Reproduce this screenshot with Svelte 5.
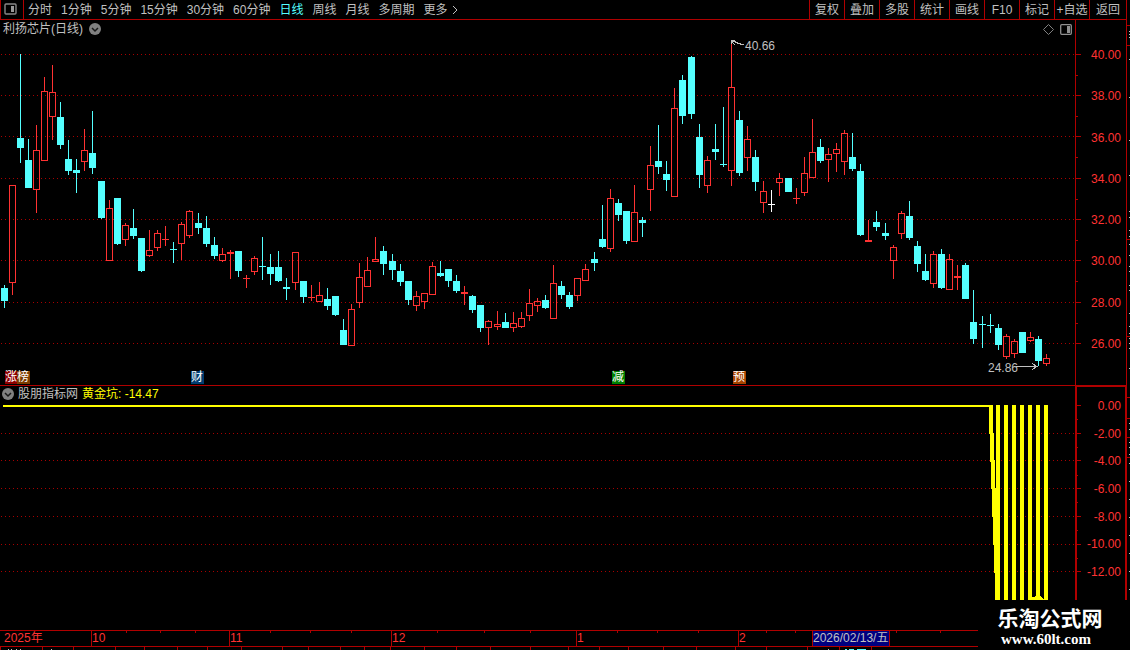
<script>
  const periods = ['分时', '1分钟', '5分钟', '15分钟', '30分钟', '60分钟', '日线', '周线', '月线', '多周期', '更多'];
  const tools = ['复权', '叠加', '多股', '统计', '画线', 'F10', '标记', '+自选', '返回'];
  let period = $state('日线');

  // both plots share one horizontal scale
  const W = 1075;
  const left = (x) => `left: ${(x / W) * 100}%`;

  const priceLabels = ['40.00', '38.00', '36.00', '34.00', '32.00', '30.00', '28.00', '26.00'];
  const priceLines = [54, 95, 136, 178, 219, 260, 302, 343];
  const priceMinor = [75, 116, 157, 199, 240, 281, 323];

  const valueLabels = ['0.00', '-2.00', '-4.00', '-6.00', '-8.00', '-10.00', '-12.00'];
  const valueLines = [405, 433, 460, 488, 516, 544, 571];
  const valueMinor = [419, 447, 475, 502, 530, 558];

  // x, high, body top, body bottom, low, u = up / d = down / f = flat
  const candles = [
    [4, 285, 288, 301, 308, 'd'], [12, 185, 185, 283, 295, 'u'], [20, 54, 138, 148, 163, 'd'],
    [28, 139, 160, 188, 188, 'd'], [36, 125, 150, 190, 213, 'u'], [44, 77, 91, 161, 161, 'u'],
    [52, 65, 92, 117, 140, 'u'], [60, 102, 117, 145, 149, 'd'], [68, 140, 159, 171, 175, 'd'],
    [76, 159, 170, 173, 193, 'd'], [84, 129, 150, 162, 171, 'u'], [92, 111, 153, 168, 174, 'd'],
    [101, 181, 181, 218, 219, 'd'], [109, 200, 208, 261, 261, 'u'], [117, 198, 198, 244, 245, 'd'],
    [125, 223, 225, 240, 246, 'u'], [133, 209, 228, 236, 239, 'd'], [141, 238, 238, 271, 272, 'd'],
    [149, 230, 250, 256, 257, 'u'], [157, 230, 233, 248, 251, 'u'], [165, 226, 239, 240, 246, 'u'],
    [173, 242, 249, 250, 263, 'd'], [181, 222, 224, 244, 260, 'u'], [189, 210, 211, 236, 238, 'u'],
    [198, 213, 223, 228, 234, 'd'], [206, 216, 228, 244, 247, 'd'], [214, 237, 245, 256, 259, 'd'],
    [222, 248, 254, 261, 262, 'u'], [230, 250, 252, 254, 279, 'u'], [238, 251, 251, 271, 277, 'd'],
    [246, 275, 278, 279, 288, 'u'], [254, 256, 258, 272, 275, 'u'], [262, 237, 266, 267, 280, 'd'],
    [270, 254, 267, 274, 285, 'd'], [278, 251, 267, 281, 282, 'd'], [286, 278, 287, 289, 300, 'd'],
    [295, 252, 252, 283, 290, 'u'], [303, 281, 281, 297, 303, 'd'], [311, 285, 297, 298, 301, 'u'],
    [319, 282, 295, 302, 302, 'u'], [327, 288, 299, 306, 310, 'd'], [335, 296, 296, 315, 316, 'd'],
    [343, 319, 330, 345, 345, 'd'], [351, 304, 309, 346, 346, 'u'], [359, 263, 277, 303, 308, 'u'],
    [367, 257, 270, 287, 287, 'u'], [375, 237, 259, 262, 262, 'u'], [383, 246, 251, 264, 275, 'd'],
    [392, 254, 261, 270, 280, 'd'], [400, 264, 271, 282, 286, 'd'], [408, 281, 281, 300, 305, 'd'],
    [416, 291, 296, 306, 311, 'u'], [424, 293, 293, 302, 309, 'u'], [432, 262, 266, 295, 295, 'u'],
    [440, 261, 273, 276, 277, 'd'], [448, 269, 269, 281, 287, 'd'], [456, 275, 281, 291, 293, 'd'],
    [464, 286, 292, 294, 305, 'u'], [472, 295, 296, 310, 313, 'd'], [480, 305, 305, 328, 332, 'd'],
    [488, 320, 321, 328, 345, 'u'], [497, 311, 324, 327, 330, 'u'], [505, 313, 322, 328, 328, 'd'],
    [513, 312, 323, 328, 332, 'u'], [521, 312, 318, 327, 328, 'u'], [529, 289, 303, 316, 321, 'u'],
    [537, 298, 301, 306, 312, 'u'], [545, 295, 300, 308, 309, 'd'], [553, 265, 283, 319, 319, 'u'],
    [561, 281, 286, 295, 299, 'd'], [569, 292, 295, 307, 309, 'd'], [577, 278, 278, 296, 301, 'u'],
    [585, 264, 269, 281, 281, 'u'], [594, 252, 259, 263, 271, 'd'], [602, 205, 239, 247, 248, 'd'],
    [610, 189, 198, 249, 252, 'u'], [618, 199, 203, 215, 221, 'd'], [626, 211, 211, 241, 244, 'd'],
    [634, 185, 212, 242, 242, 'u'], [642, 217, 220, 223, 237, 'd'], [650, 146, 165, 190, 211, 'u'],
    [658, 125, 161, 167, 174, 'd'], [666, 161, 174, 180, 191, 'd'], [674, 88, 108, 197, 197, 'u'],
    [682, 75, 80, 116, 124, 'd'], [691, 56, 57, 114, 119, 'd'], [699, 124, 137, 175, 188, 'd'],
    [707, 156, 160, 186, 193, 'u'], [715, 124, 149, 152, 160, 'd'], [723, 107, 164, 165, 167, 'd'],
    [731, 43, 87, 171, 186, 'u'], [739, 111, 120, 173, 176, 'd'], [747, 126, 139, 158, 171, 'u'],
    [755, 150, 157, 182, 191, 'd'], [763, 181, 191, 203, 213, 'u'], [771, 190, 204, 205, 212, 'f'],
    [779, 173, 178, 183, 196, 'u'], [788, 178, 178, 192, 192, 'd'], [796, 188, 198, 199, 204, 'u'],
    [804, 157, 173, 193, 196, 'u'], [812, 119, 152, 178, 178, 'u'], [820, 139, 147, 161, 163, 'd'],
    [828, 148, 154, 160, 182, 'u'], [836, 143, 149, 154, 172, 'u'], [844, 130, 133, 162, 175, 'u'],
    [852, 133, 157, 169, 171, 'd'], [860, 164, 171, 235, 236, 'd'], [868, 220, 240, 242, 242, 'u'],
    [876, 211, 222, 227, 231, 'd'], [885, 223, 233, 236, 240, 'd'], [893, 245, 247, 261, 279, 'u'],
    [901, 211, 213, 234, 239, 'u'], [909, 201, 216, 238, 240, 'd'], [917, 241, 246, 264, 272, 'd'],
    [925, 254, 271, 280, 281, 'd'], [933, 251, 254, 284, 288, 'u'], [941, 249, 254, 288, 289, 'd'],
    [949, 254, 259, 290, 290, 'u'], [957, 265, 276, 278, 290, 'u'], [965, 263, 265, 299, 299, 'd'],
    [973, 290, 322, 339, 344, 'd'], [982, 316, 324, 325, 348, 'd'], [990, 314, 325, 326, 333, 'd'],
    [998, 324, 328, 345, 350, 'd'], [1006, 334, 336, 357, 359, 'u'], [1014, 339, 341, 354, 358, 'u'],
    [1022, 332, 332, 353, 353, 'd'], [1030, 332, 337, 341, 342, 'u'], [1038, 336, 339, 361, 366, 'd'],
    [1046, 354, 358, 364, 366, 'u']
  ];
  const colors = { u: '#ff3232', d: '#54ffff', f: '#ffffff' };

  const badges = [
    { x: 5, text: '涨', bg: '#8c0000' },
    { x: 17, text: '榜', bg: '#7c3c00' },
    { x: 191, text: '财', bg: '#003c70' },
    { x: 612, text: '减', bg: '#008000' },
    { x: 733, text: '预', bg: '#a84400' }
  ];

  const bars = [996, 1004, 1012, 1020, 1028, 1036, 1044];

  const months = [
    { x: 91, text: '10' },
    { x: 229, text: '11' },
    { x: 391, text: '12' },
    { x: 576, text: '1' },
    { x: 738, text: '2' }
  ];
  const weeks = [126, 160, 195, 270, 310, 351, 437, 484, 530, 617, 657, 698, 766, 795, 896, 940];
  const tabs = [0, 42, 73, 115, 144, 177, 207, 241, 282, 308, 340, 364, 390, 424, 456, 490, 530, 568, 599, 628, 663, 696, 735, 766, 807, 839, 871];

  const edgeLines = [25, 45, 239, 336, 397, 418, 437, 457];
  const edgeDots = [31, 34, 37, 59, 97, 140, 175, 211, 217, 230, 236, 244, 255, 266, 271, 285, 290, 313, 326, 333, 338, 343, 348, 368, 423, 429, 442, 447, 454, 463, 481, 499, 517, 535, 553, 571, 589];
</script>

<div class="terminal">
  <div class="main">
    <header>
      <button class="layout" aria-label="布局">
        <svg width="13" height="12" viewBox="0 0 13 12">
          <rect x="1" y="1" width="11" height="10" rx="1" fill="none" stroke="#888" stroke-width="1.4" />
          <rect x="7" y="3" width="3" height="6" fill="#999" />
        </svg>
      </button>
      <nav class="periods">
        {#each periods as p}
          <button class:active={p === period} onclick={() => (period = p)}>{p}</button>
        {/each}
        <svg class="more" width="6" height="10" viewBox="0 0 6 10">
          <path d="M1 1l4 4-4 4" fill="none" stroke="#c0c0c0" />
        </svg>
      </nav>
      <nav class="tools">
        {#each tools as t}
          <button>{t}</button>
        {/each}
      </nav>
    </header>

    <section class="price">
      <div class="plot">
        <svg class="chart" viewBox="0 20 1075 365" preserveAspectRatio="none" shape-rendering="crispEdges">
          {#each priceLines as y}
            <line class="grid" x1="1" x2={W} y1={y + 0.5} y2={y + 0.5} />
          {/each}
          {#each candles as [x, high, top, bottom, low, kind]}
            <g fill={colors[kind]}>
              <rect {x} y={high} width="1" height={top - high} />
              <rect {x} y={bottom} width="1" height={low - bottom} />
              {#if kind === 'u' && bottom - top > 2}
                <rect x={x - 2.5} y={top + 0.5} width="6" height={bottom - top - 1} fill="none" stroke={colors.u} />
              {:else}
                <rect x={x - 3} y={top} width="7" height={bottom - top} />
              {/if}
            </g>
          {/each}
          <path class="arrow" d="M731.5 44v-4h3M731.5 41.500h3l3 1.500 6 2M732 42l3 3" />
          <path class="arrow" d="M1016 366.500h21M1032 363.500l5 3-5 3" />
        </svg>
        <div class="title">
          <h1>利扬芯片(日线)</h1>
          <button class="round" aria-label="展开">
            <svg width="12" height="12" viewBox="0 0 12 12">
              <circle cx="6" cy="6" r="6" fill="#808080" />
              <path d="M3 5l3 3 3-3" fill="none" stroke="#181818" stroke-width="1.500" />
            </svg>
          </button>
          <svg class="diamond" width="11" height="11" viewBox="0 0 11 11">
            <path d="M5.500.5l5 5-5 5-5-5z" fill="none" stroke="#808080" />
          </svg>
          <svg width="12" height="11" viewBox="0 0 12 11">
            <rect x=".7" y=".7" width="10.600" height="9.600" rx="1" fill="none" stroke="#909090" stroke-width="1.300" />
            <rect x="7" y="2" width="3" height="7" fill="#909090" />
          </svg>
        </div>
        <span class="mark high" style={left(745)}>40.66</span>
        <span class="mark low" style={left(988)}>24.86</span>
        {#each badges as b}
          <span class="badge" style="{left(b.x)}; background: {b.bg}">{b.text}</span>
        {/each}
      </div>
      <div class="axis">
        <svg width="6" height="365" viewBox="0 20 6 365" shape-rendering="crispEdges">
          {#each priceLines as y}<rect {y} width="5" height="1" />{/each}
          {#each priceMinor as y}<rect {y} width="2" height="1" />{/each}
        </svg>
        {#each priceLabels as label}
          <span>{label}</span>
        {/each}
      </div>
    </section>

    <section class="indicator">
      <div class="plot">
        <svg class="chart" viewBox="0 386 1075 244" preserveAspectRatio="none" shape-rendering="crispEdges">
          {#each valueLines.slice(1) as y}
            <line class="grid" x1="1" x2={W} y1={y + 0.5} y2={y + 0.5} />
          {/each}
          <g fill="#ffff00">
            <rect x="3" y="405" width="990" height="2" />
            {#each valueLines as y, i}
              <rect x={989 + i} {y} width={i > 2 ? 8 - i : 4} height="29" />
            {/each}
            {#each bars as x}
              <rect {x} y="405" width="4" height="195" />
            {/each}
            <path d="M1030 600v-3h4l3-2h2l5 5z" />
          </g>
        </svg>
        <div class="legend">
          <button class="round" aria-label="展开">
            <svg width="12" height="12" viewBox="0 0 12 12">
              <circle cx="6" cy="6" r="6" fill="#808080" />
              <path d="M3 5l3 3 3-3" fill="none" stroke="#181818" stroke-width="1.500" />
            </svg>
          </button>
          <span>股朋指标网</span>
          <span class="value">黄金坑: -14.47</span>
        </div>
      </div>
      <div class="axis">
        <svg width="6" height="243" viewBox="0 387 6 243" shape-rendering="crispEdges">
          {#each valueLines as y}<rect {y} width="4" height="1" />{/each}
          {#each valueMinor as y}<rect {y} width="1" height="1" />{/each}
        </svg>
        {#each valueLabels as label}
          <span>{label}</span>
        {/each}
      </div>
    </section>

    <footer>
      <div class="dates">
        <span class="year">2025年</span>
        {#each weeks as x}
          <i style={left(x)}></i>
        {/each}
        {#each months as m}
          <span class="month" style={left(m.x)}>{m.text}</span>
        {/each}
        <span class="current" style={left(812)}>2026/02/13/五</span>
      </div>
      <div class="tabs">
        {#each tabs as x}
          <i style={left(x)}></i>
        {/each}
        <svg class="chart" viewBox="0 0 1075 3" preserveAspectRatio="none" shape-rendering="crispEdges">
          <path d="M8 2h1M11 2h1M16 2h1M20 2h1M51 2h1M828 2h1" stroke="#c0c0c0" />
          <path d="M845 2h2M849 2h5M857 2h9" stroke="#54ffff" />
        </svg>
      </div>
    </footer>
  </div>

  <svg class="edge" width="3" height="650" viewBox="0 0 3 650" shape-rendering="crispEdges">
    {#each edgeLines as y}<rect {y} width="3" height="1" fill="#b00000" />{/each}
    {#each edgeDots as y}<rect x="2" {y} width="1" height="1" fill="#c0c0c0" />{/each}
  </svg>

  <div class="watermark">
    <strong>乐淘公式网</strong>
    <a href="http://www.60lt.com">www.60lt.com</a>
  </div>
</div>

<style>
  :global(body) {
    background: #000;
    margin: 0;
  }
  .terminal {
    background: #000;
    color: #c0c0c0;
    display: flex;
    font-family: "Liberation Sans", "Noto Sans CJK SC", sans-serif;
    font-size: 12px;
    line-height: 16px;
    overflow: hidden;
    position: relative;
  }
  .main {
    border-right: 1px solid #b00000;
    flex: 1;
    min-width: 0;
  }
  .edge {
    flex: none;
  }
  svg {
    display: block;
  }
  button {
    background: none;
    border: none;
    color: inherit;
    cursor: pointer;
    font: inherit;
    padding: 0;
    white-space: nowrap;
  }

  header {
    border-bottom: 1px solid #b00000;
    display: flex;
    height: 19px;
  }
  .layout {
    border-left: 1px solid #b00000;
    border-right: 1px solid #b00000;
    box-sizing: border-box;
    padding: 0 0 2px 3px;
    width: 24px;
  }
  .periods {
    align-items: center;
    display: flex;
    flex: 1;
    gap: 9px;
    padding-left: 4px;
  }
  .periods .active {
    color: #54ffff;
  }
  .more {
    margin-left: -5px;
  }
  .tools {
    display: flex;
  }
  .tools button {
    border-left: 1px solid #b00000;
    box-sizing: border-box;
    width: 35px;
  }
  .tools button:last-child {
    width: 37px;
  }

  section {
    display: flex;
  }
  .plot {
    flex: 1;
    min-width: 0;
    position: relative;
  }
  .chart {
    width: 100%;
  }
  .price {
    border-bottom: 1px solid #b00000;
  }
  .price .chart {
    height: 365px;
  }
  .indicator .chart {
    height: 244px;
  }
  .grid {
    stroke: #a80000;
    stroke-dasharray: 1 3;
  }
  .arrow {
    fill: none;
    stroke: #c0c0c0;
  }
  .axis {
    border-left: 1px solid #b00000;
    box-sizing: border-box;
    color: #ff3232;
    display: flex;
    flex-direction: column;
    justify-content: space-between;
    line-height: 20px;
    padding: 25px 5px 31px 0;
    position: relative;
    text-align: right;
    width: 51px;
  }
  .axis svg {
    fill: #b00000;
    left: 0;
    position: absolute;
    top: 0;
  }
  .indicator .axis {
    border-left-width: 2px;
    border-right: 1px solid #b00000;
    border-top: 1px solid #b00000;
    padding: 9px 4px 48px 0;
  }

  .title, .legend {
    align-items: center;
    display: flex;
    left: 0;
    position: absolute;
    right: 0;
    top: 1px;
  }
  .title {
    gap: 6px;
    padding: 0 3px;
  }
  .title h1 {
    font-size: 12px;
    font-weight: normal;
    margin: 0;
  }
  .diamond {
    margin-left: auto;
  }
  .legend {
    gap: 4px;
    padding-left: 2px;
    top: 0;
  }
  .value {
    color: #ffff00;
  }
  .mark, .badge {
    position: absolute;
  }
  .high {
    top: 18px;
  }
  .low {
    bottom: 9px;
  }
  .badge {
    bottom: 1px;
    color: #fff;
    line-height: 13px;
    width: 13px;
  }

  .dates {
    border-bottom: 1px solid #b00000;
    border-top: 1px solid #b00000;
    color: #ff3232;
    height: 15px;
    line-height: 15px;
    margin-right: 51px;
    position: relative;
  }
  .year {
    padding-left: 4px;
  }
  .month, .current {
    border-left: 1px solid #b00000;
    position: absolute;
    top: 0;
  }
  .current {
    background: #000080;
    border-right: 1px solid #b00000;
    color: #c0c0c0;
    padding-right: 1px;
  }
  footer i {
    background: #b00000;
    height: 2px;
    position: absolute;
    top: 0;
    width: 1px;
  }
  .tabs {
    height: 3px;
    margin-right: 51px;
    position: relative;
  }
  .tabs .chart {
    height: 3px;
  }
  .tabs i {
    height: 3px;
  }

  .watermark {
    align-items: center;
    background: #000;
    bottom: 0;
    box-sizing: border-box;
    color: #fff;
    display: flex;
    flex-direction: column;
    height: 50px;
    padding: 8px 8px 0 0;
    position: absolute;
    right: 0;
    width: 152px;
  }
  .watermark strong {
    font-size: 21px;
    line-height: 22px;
  }
  .watermark a {
    color: #fff;
    font-family: "Liberation Serif", serif;
    font-size: 15px;
    font-weight: bold;
    line-height: 18px;
    margin-right: 8px;
    text-decoration: none;
  }
</style>
